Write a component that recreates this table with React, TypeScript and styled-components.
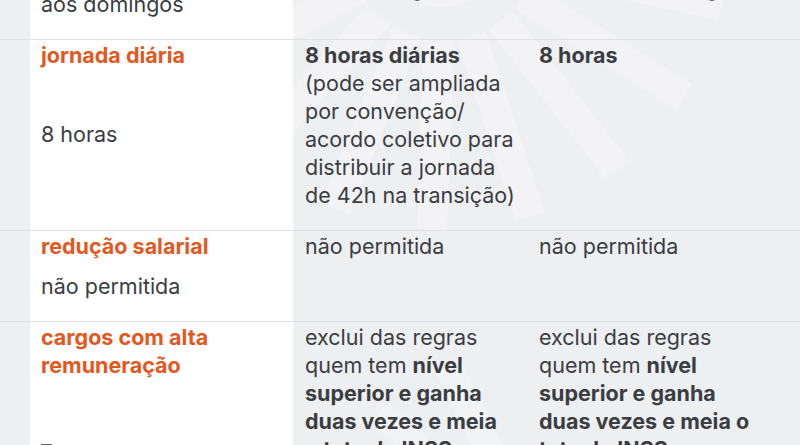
import React from "react";
import styled, { createGlobalStyle } from "styled-components";

const GlobalStyle = createGlobalStyle`
  html, body {
    margin: 0;
    padding: 0;
    background: #eeeff1;
  }

  body {
    font-family: Inter, "Noto Sans", sans-serif;
    overflow: hidden;
  }
`;

type Row = {
  topic: string[];
  current: React.ReactNode;
  gap: number;
  first: React.ReactNode;
  second: React.ReactNode;
};

const rows: Row[] = [
  {
    topic: ["folga semanal"],
    current: "1 dia, de preferência aos\u00a0domingos",
    gap: 16,
    first: "2 dias, um deles preferencialmente aos\u00a0domingos",
    second: "2 dias de descanso semanal, sendo um deles\u00a0aos\u00a0domingos",
  },
  {
    topic: ["jornada diária"],
    current: "8 horas",
    gap: 51,
    first: (
      <>
        <b>8 horas diárias</b> (pode ser ampliada por convenção/ acordo
        coletivo para distribuir a jornada de 42h na transição)
      </>
    ),
    second: <b>8 horas</b>,
  },
  {
    topic: ["redução salarial"],
    current: "não permitida",
    gap: 12,
    first: "não permitida",
    second: "não permitida",
  },
  {
    topic: ["cargos com alta", "remuneração"],
    current: "–",
    gap: 51,
    first: (
      <>
        exclui das regras quem tem{" "}
        <b>nível superior e ganha duas vezes e meia o{"\u00a0"}teto do INSS</b>
      </>
    ),
    second: (
      <>
        exclui das regras quem tem{" "}
        <b>nível superior e ganha duas vezes e meia o teto do INSS</b>
      </>
    ),
  },
];

const rays = [-8, 12, 32, 52, 72, 92, 112, 132, 152];

const Watermark = () => (
  <Mark viewBox="0 0 507 445" aria-hidden="true">
    <g fill="#ffffff" opacity="0.3">
      {rays.map((a) => (
        <rect
          key={a}
          x="95"
          y="-14"
          width="190"
          height="30"
          transform={`translate(150 -55) rotate(${a})`}
        />
      ))}
      <circle cx="150" cy="-55" r="62" />
    </g>
    <g fill="#ffffff" opacity="0.25">
      {[200, 222, 244].map((a) => (
        <rect
          key={a}
          x="70"
          y="-14"
          width="150"
          height="28"
          transform={`translate(250 560) rotate(${a})`}
        />
      ))}
    </g>
  </Mark>
);

const App = () => {
  return (
    <>
      <GlobalStyle />
      <Page>
        <Watermark />
        <Table>
          {rows.map((row) => (
            <TableRow key={row.topic.join(" ")}>
              <LabelCell>
                <Topic>
                  {row.topic.map((line) => (
                    <span key={line}>{line}</span>
                  ))}
                </Topic>
                <Current $gap={row.gap}>{row.current}</Current>
              </LabelCell>
              <Cell>{row.first}</Cell>
              <Cell>{row.second}</Cell>
            </TableRow>
          ))}
        </Table>
      </Page>
    </>
  );
};

const Page = styled.div`
  position: relative;
  width: 800px;
  height: 445px;
  overflow: hidden;
  background: #eeeff1;
  color: #3a3d42;
  font-size: 21.5px;
  line-height: 28px;
`;

const Mark = styled.svg`
  position: absolute;
  top: 0;
  left: 293px;
  width: 507px;
  height: 445px;
`;

const Table = styled.div`
  position: relative;
  margin-top: -83px;
`;

const TableRow = styled.div`
  display: grid;
  grid-template-columns: 263px 234px 250px;
  padding-left: 30px;
  border-bottom: 1px solid #dfe0e3;
`;

const LabelCell = styled.div`
  display: flex;
  flex-direction: column;
  padding: 1px 11px 21px;
  background: #ffffff;
`;

const Topic = styled.div`
  display: flex;
  flex-direction: column;
  color: #e2581f;
  font-weight: 700;
`;

const Current = styled.div<{ $gap: number }>`
  margin-top: ${(p) => p.$gap}px;
`;

const Cell = styled.div`
  padding: 1px 12px 21px;

  b {
    font-weight: 700;
  }
`;

export default App;
